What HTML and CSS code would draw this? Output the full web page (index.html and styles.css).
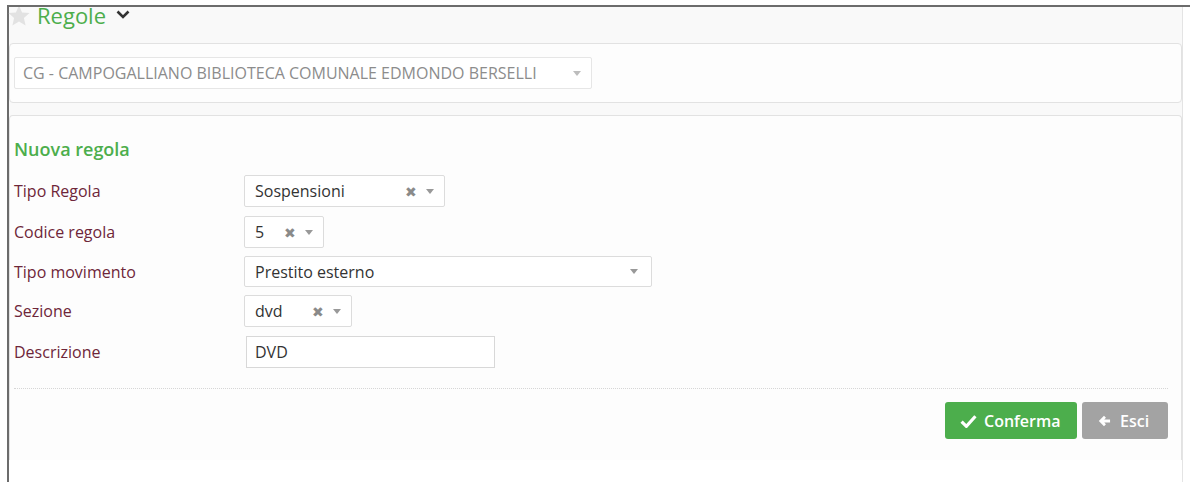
FILE: index.html
```html
<!DOCTYPE html>
<html lang="it">
<head>
<meta charset="utf-8">
<title>Regole</title>
<link rel="stylesheet" href="styles.css">
</head>
<body>
<div class="frame">
  <div class="page">
    <div class="page-fill">
      <header class="page-header">
        <span class="star-clip">
          <svg class="star" viewBox="0 0 24 24" width="24" height="24"><path d="M12 1.5l3.1 6.9 7.4.7-5.6 5 1.7 7.4L12 17.6l-6.6 3.9 1.7-7.4-5.6-5 7.4-.7z" fill="#e2e2e2"/></svg>
        </span>
        <h1 class="title">Regole</h1>
        <svg class="chevron" viewBox="0 0 14 9" width="14" height="9"><path d="M1.5 1.5l5.5 5.5 5.5-5.5" fill="none" stroke="#333" stroke-width="2.6"/></svg>
      </header>

      <section class="panel panel-library">
        <div class="select select-library">
          <span class="select-text muted">CG - CAMPOGALLIANO BIBLIOTECA COMUNALE EDMONDO BERSELLI</span>
          <span class="arrow"></span>
        </div>
      </section>

      <section class="panel panel-form">
        <h2 class="form-title">Nuova regola</h2>
        <div class="form-grid">
          <div class="row">
            <label class="label">Tipo Regola</label>
            <div class="select w-tipo">
              <span class="select-text">Sospensioni</span>
              <span class="clear">&#x2716;</span>
              <span class="arrow"></span>
            </div>
          </div>
          <div class="row">
            <label class="label">Codice regola</label>
            <div class="select w-codice">
              <span class="select-text">5</span>
              <span class="clear">&#x2716;</span>
              <span class="arrow"></span>
            </div>
          </div>
          <div class="row row-short">
            <label class="label">Tipo movimento</label>
            <div class="select w-movimento">
              <span class="select-text">Prestito esterno</span>
              <span class="arrow"></span>
            </div>
          </div>
          <div class="row">
            <label class="label">Sezione</label>
            <div class="select w-sezione">
              <span class="select-text">dvd</span>
              <span class="clear">&#x2716;</span>
              <span class="arrow"></span>
            </div>
          </div>
          <div class="row">
            <label class="label">Descrizione</label>
            <input class="text-input" type="text" value="DVD">
          </div>
        </div>
        <div class="actions">
          <button class="btn btn-confirm">
            <svg viewBox="0 0 16 13" width="17" height="14"><path d="M1.5 7l4.5 4.5 8.5-9.5" fill="none" stroke="#fff" stroke-width="3"/></svg>
            Conferma
          </button>
          <button class="btn btn-exit">
            <svg viewBox="0 0 14 12" width="13" height="12"><path d="M13 6H3.5M7.5 1.5L3 6l4.5 4.5" fill="none" stroke="#fff" stroke-width="3"/></svg>
            Esci
          </button>
        </div>
      </section>
    </div>
  </div>
</div>
</body>
</html>
```

FILE: styles.css
```css
* {
  box-sizing: border-box;
}

html, body {
  margin: 0;
  padding: 0;
  background: #fff;
  overflow: hidden;
}

body {
  font-family: "Open Sans", "Liberation Sans", sans-serif;
  color: #333;
}

.frame {
  margin: 5px 0 0 7px;
  height: 477px;
  border-top: 2px solid #6c6c6c;
  border-left: 2px solid #6c6c6c;
}

.page {
  width: 1174px;
  height: 100%;
  border-right: 1px solid #e4e4e4;
}

.page-fill {
  height: 453px;
  display: flex;
  flex-direction: column;
  background: #f9f9f9;
}

/* header row; the star sits partly under the top edge */
.page-header {
  height: 36px;
  flex: none;
  display: flex;
  align-items: flex-end;
}

.star-clip {
  align-self: flex-start;
  display: block;
  height: 20px;
  overflow: hidden;
  margin-left: -2px;
}

.star {
  display: block;
  margin-top: -3px;
}

.title {
  margin: 0 0 19px 6px;
  font-size: 22px;
  font-weight: 400;
  line-height: 17px;
  color: #4cae4c;
}

.chevron {
  margin: 0 0 24px 10px;
}

.panel {
  background: #fdfdfd;
  border: 1px solid #e2e2e2;
  border-radius: 4px;
}

.panel-library {
  height: 60px;
  flex: none;
  padding: 13px 0 0 4px;
  margin-bottom: 12px;
}

/* continues below the visible area: no bottom edge */
.panel-form {
  flex: 1;
  padding: 21px 13px 0 4px;
  border-bottom: none;
  border-radius: 4px 4px 0 0;
}

.form-title {
  margin: 0 0 14px;
  font-size: 18px;
  font-weight: 600;
  line-height: 24px;
  color: #4cae4c;
}

.form-grid {
  display: flex;
  flex-direction: column;
  gap: 9px;
}

.row {
  display: flex;
  align-items: center;
}

.row-short {
  margin-bottom: -1px;
}

.label {
  width: 230px;
  flex: none;
  font-size: 16px;
  color: #6e2639;
}

.select {
  height: 32px;
  display: flex;
  align-items: center;
  padding: 0 0 0 10px;
  background: #fff;
  border: 1px solid #dcdcdc;
  border-radius: 2px;
  font-size: 16px;
  color: #333;
}

.select-text {
  flex: 1;
  white-space: nowrap;
}

.muted {
  color: #8c8c8c;
  font-size: 16px;
}

.select-library {
  width: 578px;
  height: 32px;
  border-color: #e6e6e6;
  padding-left: 8px;
}

.clear {
  width: 20px;
  font-size: 14px;
  color: #8a8a8a;
  text-align: center;
}

.arrow {
  width: 18px;
  margin-right: 5px;
  display: flex;
  justify-content: center;
}

.arrow::before {
  content: "";
  border-left: 4px solid transparent;
  border-right: 4px solid transparent;
  border-top: 5px solid #999;
}

.select-library .arrow {
  margin-right: 5px;
}

.select-library .arrow::before {
  border-top-color: #bdbdbd;
}

.w-tipo {
  width: 201px;
}

.w-codice {
  width: 80px;
}

.w-movimento {
  width: 408px;
  height: 31px;
  margin-top: -1px;
}

.w-movimento .arrow {
  margin-right: 8px;
}

.w-sezione {
  width: 108px;
}

.text-input {
  width: 249px;
  height: 32px;
  margin-left: 2px;
  padding: 0 8px;
  background: #fff;
  border: 1px solid #d8d8d8;
  border-radius: 0;
  font-family: inherit;
  font-size: 16px;
  color: #333;
  outline: none;
}

.actions {
  margin-top: 20px;
  padding-top: 13px;
  border-top: 1px dotted #d6d6d6;
  display: flex;
  justify-content: flex-end;
  gap: 5px;
}

.btn {
  height: 37px;
  display: flex;
  align-items: center;
  gap: 7px;
  border: none;
  border-radius: 3px;
  font-family: inherit;
  font-size: 16px;
  font-weight: 600;
  color: #fff;
}

.btn-confirm {
  width: 132px;
  padding: 0 0 0 15px;
  background: #4cae4c;
}

.btn-exit {
  width: 86px;
  padding: 0 0 0 16px;
  gap: 9px;
  background: #a3a3a3;
}
```
